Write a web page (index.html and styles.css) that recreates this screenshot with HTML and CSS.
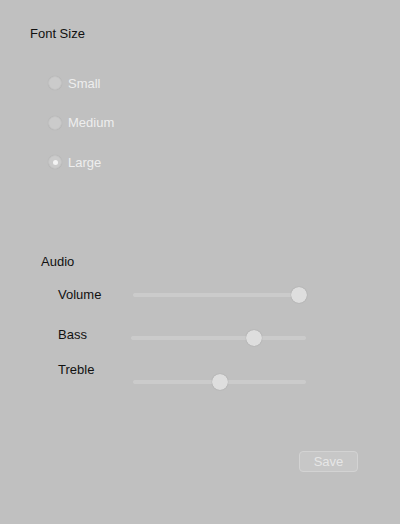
FILE: index.html
```html
<!DOCTYPE html>
<html lang="en">
<head>
    <meta charset="UTF-8">
    <meta name="viewport" content="width=device-width, initial-scale=1.0">
    <title>Preferences</title>
    <link rel="stylesheet" href="styles.css">
</head>
<body>
    <div class="panel">
        <div class="title">Font Size</div>

        <div class="radio-group">
            <label class="radio-row">
                <span class="radio"></span>
                <span class="radio-label">Small</span>
            </label>
            <label class="radio-row">
                <span class="radio"></span>
                <span class="radio-label">Medium</span>
            </label>
            <label class="radio-row">
                <span class="radio checked"></span>
                <span class="radio-label">Large</span>
            </label>
        </div>

        <div class="audio">
            <div class="section-title">Audio</div>

            <div class="slider-row volume">
                <span class="slider-label">Volume</span>
                <div class="slider">
                    <div class="track"></div>
                    <div class="thumb" style="left: 96%;"></div>
                </div>
            </div>

            <div class="slider-row bass">
                <span class="slider-label">Bass</span>
                <div class="slider">
                    <div class="track"></div>
                    <div class="thumb" style="left: 70%;"></div>
                </div>
            </div>

            <div class="slider-row treble">
                <span class="slider-label">Treble</span>
                <div class="slider">
                    <div class="track"></div>
                    <div class="thumb" style="left: 50%;"></div>
                </div>
            </div>
        </div>

        <div class="actions">
            <button class="button" disabled>Save</button>
        </div>
    </div>
</body>
</html>
```

FILE: styles.css
```css
body {
    margin: 0;
    background-color: #c0c0c0;
    font-family: "Liberation Sans", Arial, sans-serif;
    font-size: 13px;
    color: #111;
}
.panel {
    padding: 26px 0 0 30px;
}
.title {
    line-height: 16px;
}
.radio-group {
    margin: 31px 0 0 18px;
    display: flex;
    flex-direction: column;
    gap: 19.5px;
}
.radio-row {
    display: flex;
    align-items: center;
    height: 20px;
    gap: 6px;
}
.radio {
    width: 12px;
    height: 12px;
    border-radius: 50%;
    background-color: #cbcbcb;
    border: 1px solid #c3c3c3;
    box-shadow: 0 0 1px rgba(0, 0, 0, 0.12);
    display: flex;
    align-items: center;
    justify-content: center;
}
.radio.checked::after {
    content: "";
    width: 5px;
    height: 5px;
    border-radius: 50%;
    background-color: #f4f4f4;
}
.radio-label {
    color: #eeeeee;
}
.audio {
    margin: 81px 0 0 11px;
}
.section-title {
    line-height: 16px;
    padding-top: 1px;
}
.slider-row {
    display: flex;
    align-items: flex-start;
    padding-left: 17px;
}
.slider-label {
    width: 75px;
    line-height: 16px;
    padding-top: 1px;
}
.volume {
    margin-top: 16px;
}
.volume .slider {
    margin-top: 1px;
}
.bass {
    margin-top: 23px;
}
.bass .slider {
    margin: 4px 0 0 -2px;
    width: 175px;
}
.treble {
    margin-top: 15px;
}
.treble .slider {
    margin-top: 13px;
}
.slider {
    position: relative;
    width: 173px;
    height: 16px;
    display: flex;
    align-items: center;
}
.track {
    width: 100%;
    height: 4px;
    border-radius: 2px;
    background-color: #cbcbcb;
}
.thumb {
    position: absolute;
    top: 0;
    width: 16px;
    height: 16px;
    margin-left: -8px;
    border-radius: 50%;
    background-color: #dedede;
    box-shadow: 0 0 1px rgba(0, 0, 0, 0.3);
}
.actions {
    display: flex;
    justify-content: flex-end;
    padding-right: 42px;
    margin-top: 61px;
}
.button {
    width: 59px;
    height: 21px;
    padding: 0;
    font-family: "Liberation Sans", Arial, sans-serif;
    font-size: 13px;
    color: #e6e6e6;
    background-color: #c7c7c7;
    border: 1px solid #d3d3d3;
    border-radius: 4px;
}
```
